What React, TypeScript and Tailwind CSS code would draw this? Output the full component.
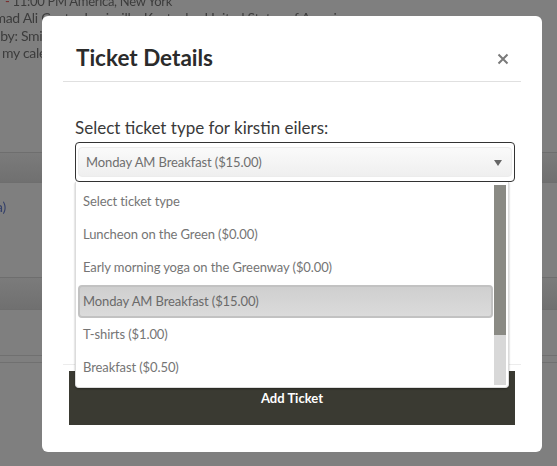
const options = [
    "Select ticket type",
    "Luncheon on the Green ($0.00)",
    "Early morning yoga on the Greenway ($0.00)",
    "Monday AM Breakfast ($15.00)",
    "T-shirts ($1.00)",
    "Breakfast ($0.50)",
];

function BackgroundPage() {
    return (
        <div className="flex h-full flex-col text-[14px] tracking-[-0.3px] leading-[17.5px] text-[#3c3c3c] blur-[0.3px]">
            <div className="-mt-[3px] mb-[3px] flex h-[9px] items-center whitespace-nowrap pl-[5px] text-[13px]">
                <span className="text-[#7a2a2a]">-</span>&nbsp;11:00 PM America, New York
            </div>
            <div className="-ml-[51px] whitespace-nowrap">Muhammad Ali Center Louisville, Kentucky, United States of America</div>
            <div className="-ml-[46px] whitespace-nowrap">Hosted by: Smith</div>
            <div className="-ml-[41px] whitespace-nowrap">Add to my calendar</div>
            <div className="mt-[90px] h-[31px] border-y border-[#6e6e6e] bg-gradient-to-b from-[#7b7b7b] to-[#707070]" />
            <div className="mt-[15px] h-[79px] -ml-[4px] text-[#34406a]">a)</div>
            <div className="h-[33px] border-y border-[#6e6e6e] bg-gradient-to-b from-[#7b7b7b] to-[#707070]" />
            <div className="mt-[45px] h-[8px] border-y border-[#707070]" />
        </div>
    );
}

function TicketDropdown() {
    return (
        <div className="absolute left-[33px] top-[100px] flex h-[206px] w-[434px] rounded-b-[4px] border-x border-b border-[#dcdcdc] bg-white pl-[2px] pr-[2px] pt-[3px] pb-[3px] shadow-[0_1px_2px_rgba(0,0,0,0.35)]">
            <ul className="flex-1">
                {options.map((option) => (
                    <li
                        key={option}
                        className={
                            option === "Monday AM Breakfast ($15.00)"
                                ? "mr-[1px] mt-[1px] flex h-[33px] items-center rounded-[4px] border-2 border-[#c2c2c2] bg-gradient-to-b from-[#cfcfcf] to-[#dbdbdb] pl-[3px] text-[13px] tracking-[-0.1px] text-[#6a6a6a]"
                                : "flex h-[33px] items-center pl-[5px] text-[13px] tracking-[-0.1px] text-[#757575]"
                        }
                    >
                        {option}
                    </li>
                ))}
            </ul>
            <div className="flex h-[200px] w-[12px] flex-col bg-[#d8d8d8]">
                <div className="h-[150px] bg-[#8a8a84]" />
            </div>
        </div>
    );
}

export default function App() {
    return (
        <div className="relative h-[466px] w-[557px] overflow-hidden bg-[#7f7f7f] font-['Lato','Noto_Sans',sans-serif]">
            <BackgroundPage />
            <div className="absolute left-[42px] top-[16px] flex h-[436px] w-[500px] flex-col rounded-[6px] bg-white">
                <div className="mx-[21px] flex h-[66px] items-center justify-between border-b border-[#e0e0e0] pl-[13px] pr-[12px] pt-[32px] pb-[12px]">
                    <h2 className="text-[22.5px] font-bold leading-none text-[#2b2b2b]">Ticket Details</h2>
                    <svg width="12" height="12" viewBox="0 0 12 12" className="text-[#7a7a7a]">
                        <path d="M1.5 1.5 10.5 10.5M10.5 1.5 1.5 10.5" stroke="currentColor" strokeWidth="2"/>
                    </svg>
                </div>
                <div className="relative flex flex-1 flex-col">
                    <label className="mt-[35px] ml-[33px] text-[17px] leading-[22px] text-[#3a3a3a]">
                        Select ticket type for kirstin eilers:
                    </label>
                    <div className="ml-[33px] mt-[3px] h-[40px] w-[440px] rounded-[4px] border border-[#333333] bg-white px-[2px] py-[4px]">
                        <div className="flex h-[30px] items-center justify-between rounded-[4px] border border-[#ececec] bg-gradient-to-b from-[#fafafa] to-[#efefef] pl-[7px] pr-[9px] pt-[1px] text-[13px] tracking-[-0.1px] text-[#6f6f6f]">
                            <span>Monday AM Breakfast ($15.00)</span>
                            <span className="h-0 w-0 border-x-[4px] border-t-[6px] border-x-transparent border-t-[#666666]" />
                        </div>
                    </div>
                    <TicketDropdown />
                    <div className="mx-[21px] mt-auto mb-[27px] border-t border-[#ececec] px-[6px] pt-[6px]">
                        <button className="flex h-[54px] w-[446px] items-start justify-center bg-[#3a3a32] pt-[19px] text-[13px] font-bold leading-[17px] text-white">
                            Add Ticket
                        </button>
                    </div>
                </div>
            </div>
        </div>
    );
}
